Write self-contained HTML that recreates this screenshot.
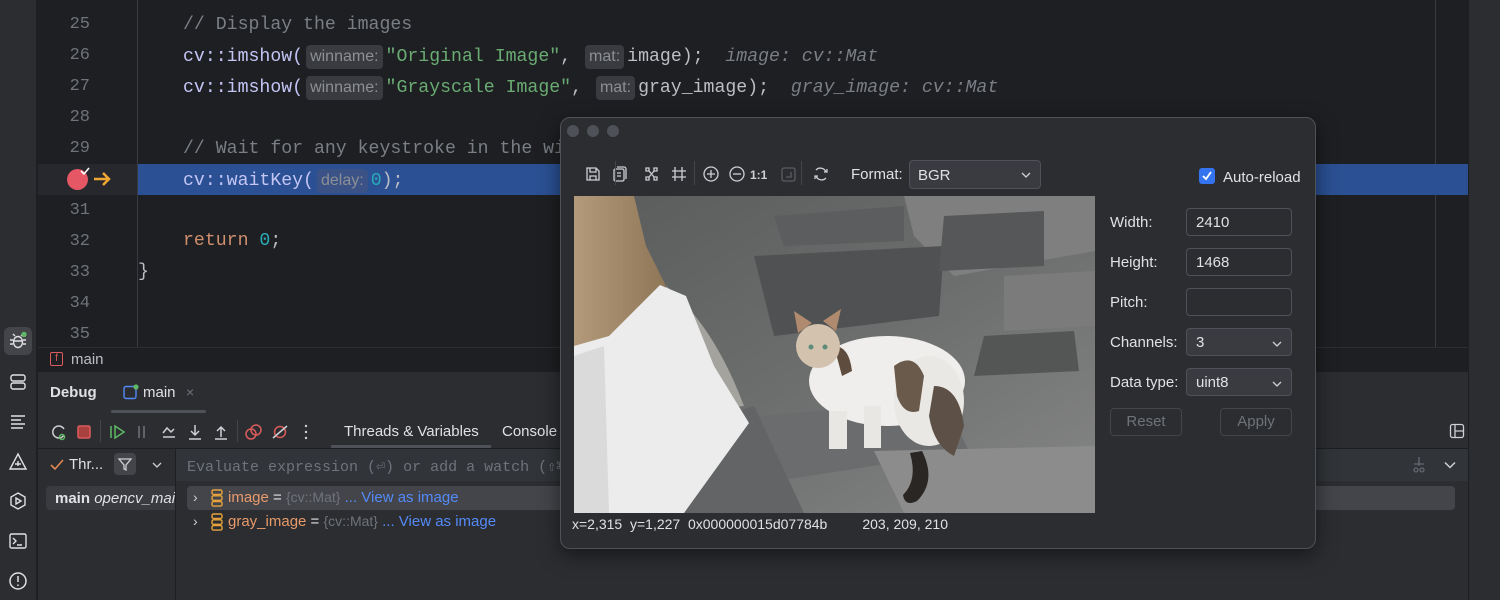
<!DOCTYPE html>
<html><head><meta charset="utf-8"><style>
*{box-sizing:border-box;margin:0;padding:0}
body{width:1500px;height:600px;overflow:hidden;background:#1e1f22;font-family:"Liberation Sans",sans-serif;color:#dfe1e5;position:relative}
.abs{position:absolute}
.mono{font-family:"Liberation Mono",monospace;font-size:18px}
.ln{position:absolute;left:50px;width:40px;text-align:right;color:#6f737a;font-family:"Liberation Mono",monospace;font-size:17px}
.code{position:absolute;left:183px;white-space:pre;font-family:"Liberation Mono",monospace;font-size:18.2px;color:#bcbec4}
.cm{color:#7a7e85}.str{color:#6aab73}.fn{color:#c3c5f5}.kw{color:#cf8e6d}.num{color:#2aacb8}
.hint{display:inline-block;background:#393b40;color:#8c8f94;font-family:"Liberation Sans",sans-serif;font-size:16px;border-radius:4px;padding:1px 4px;margin:0 3px;line-height:22px}
.it{font-style:italic;color:#7a7e85}
.tb{position:absolute;left:0;top:0;width:37px;height:600px;background:#2b2d30;border-right:1px solid #1e1f22}
.ico{position:absolute;left:8px;width:20px;height:20px}
.field{position:absolute;left:625px;width:106px;height:28px;border:1px solid #4e5157;border-radius:4px;background:#2b2d30;font-size:15px;padding:5px 9px;color:#dfe1e5}
.lbl{position:absolute;left:549px;font-size:15px;color:#dfe1e5}
</style></head><body>
<div class="tb">
 <div class="abs" style="left:4px;top:327px;width:28px;height:28px;background:#43454a;border-radius:6px"></div>
 <svg class="ico" style="top:331px" viewBox="0 0 20 20" fill="none" stroke="#dfe1e5" stroke-width="1.4"><ellipse cx="10" cy="11" rx="4.5" ry="5.5"/><path d="M5 9H2M5 13H2M15 9h3M15 13h3M7 5l-2-2M13 5l2-2M5.5 10h9"/><circle cx="16" cy="3.5" r="2.7" fill="#5fb865" stroke="none"/></svg>
 <svg class="ico" style="top:372px" viewBox="0 0 20 20" fill="none" stroke="#dfe1e5" stroke-width="1.4"><rect x="3" y="3" width="14" height="6" rx="2"/><rect x="3" y="11" width="14" height="6" rx="2"/></svg>
 <svg class="ico" style="top:412px" viewBox="0 0 20 20" fill="none" stroke="#dfe1e5" stroke-width="1.4"><path d="M3 4h14M3 8h10M3 12h14M3 16h12"/></svg>
 <svg class="ico" style="top:452px" viewBox="0 0 20 20" fill="none" stroke="#dfe1e5" stroke-width="1.4"><path d="M10 2L18 17H2Z M7 12h6M10 9v5"/></svg>
 <svg class="ico" style="top:491px" viewBox="0 0 20 20" fill="none" stroke="#dfe1e5" stroke-width="1.4"><path d="M10 2l7 4v8l-7 4-7-4V6z"/><path d="M8 7v6l5-3z"/></svg>
 <svg class="ico" style="top:531px" viewBox="0 0 20 20" fill="none" stroke="#dfe1e5" stroke-width="1.4"><rect x="2" y="3" width="16" height="14" rx="1.5"/><path d="M5 7l3 3-3 3M9 14h5"/></svg>
 <svg class="ico" style="top:571px" viewBox="0 0 20 20" fill="none" stroke="#dfe1e5" stroke-width="1.5"><circle cx="10" cy="10" r="8"/><path d="M10 5v6M10 13.5v1.5"/></svg>
</div>
<div class="abs" style="left:137px;top:0;width:1px;height:348px;background:#393b40"></div>
<div class="abs" style="left:1435px;top:0;width:1px;height:348px;background:#393b40"></div>
<div class="abs" style="left:1468px;top:0;width:32px;height:600px;background:#2b2d30;border-left:1px solid #1e1f22"></div>
<div class="abs" style="left:38px;top:164px;width:99px;height:31px;background:#26282e"></div>
<div class="abs" style="left:138px;top:164px;width:1330px;height:31px;background:#2b5093"></div>
<div class="ln" style="top:15px">25</div><div class="ln" style="top:46px">26</div><div class="ln" style="top:77px">27</div><div class="ln" style="top:108px">28</div><div class="ln" style="top:139px">29</div>
<div class="ln" style="top:201px">31</div><div class="ln" style="top:232px">32</div><div class="ln" style="top:263px">33</div><div class="ln" style="top:294px">34</div><div class="ln" style="top:325px">35</div>
<div class="abs" style="left:67px;top:169px;width:21px;height:21px;border-radius:50%;background:#e55765"></div>
<svg class="abs" style="left:79px;top:166px" width="12" height="10" viewBox="0 0 12 10"><path d="M2 5l3 3 5-6" stroke="#fff" stroke-width="1.6" fill="none"/></svg>
<svg class="abs" style="left:92px;top:170px" width="20" height="18" viewBox="0 0 20 18"><path d="M2 9h15M11 3l6 6-6 6" stroke="#f0a732" stroke-width="2.5" fill="none"/></svg>
<div class="code cm" style="top:15px">// Display the images</div>
<div class="code" style="top:45px"><span class="fn">cv::imshow(</span><span class="hint">winname:</span><span class="str">"Original Image"</span>, <span class="hint">mat:</span>image);  <span class="it">image: cv::Mat</span></div>
<div class="code" style="top:76px"><span class="fn">cv::imshow(</span><span class="hint">winname:</span><span class="str">"Grayscale Image"</span>, <span class="hint">mat:</span>gray_image);  <span class="it">gray_image: cv::Mat</span></div>
<div class="code cm" style="top:139px">// Wait for any keystroke in the window</div>
<div class="code" style="top:169px"><span class="fn">cv::waitKey(</span><span class="hint" style="background:#3a5286">delay:</span><span class="num">0</span>);</div>
<div class="code" style="top:231px"><span class="kw">return</span> <span class="num">0</span>;</div>
<div class="code" style="top:262px;left:138px">}</div>
<div class="abs" style="left:38px;top:347px;width:1430px;height:25px;background:#1e1f22;border-top:1px solid #2b2d30"></div>
<div class="abs" style="left:50px;top:352px;width:13px;height:14px;border:1.5px solid #db5c5c;border-radius:2px;color:#db5c5c;font-size:10px;text-align:center;line-height:11px">f</div>
<div class="abs" style="left:71px;top:351px;font-size:15px;color:#bcbec4">main</div>
<div class="abs" style="left:38px;top:372px;width:1430px;height:228px;background:#2b2d30"></div>
<div class="abs" style="left:50px;top:384px;font-size:15px;font-weight:bold">Debug</div>
<svg class="abs" style="left:123px;top:384px" width="16" height="16" viewBox="0 0 16 16"><rect x="1" y="2.5" width="12" height="12" rx="2" stroke="#548af7" stroke-width="1.4" fill="none"/><circle cx="13" cy="3" r="2.6" fill="#5fb865"/></svg>
<div class="abs" style="left:143px;top:384px;font-size:15px">main</div>
<div class="abs" style="left:186px;top:384px;font-size:14px;color:#6f737a">×</div>
<div class="abs" style="left:111px;top:410px;width:95px;height:3px;background:#4e5157;border-radius:2px"></div>
<div class="abs" style="left:38px;top:448px;width:1430px;height:1px;background:#1e1f22"></div>
<svg class="abs" style="left:50px;top:422px" width="270" height="20" viewBox="0 0 270 20" fill="none" stroke-width="1.5">
 <path d="M14 7a6 6 0 1 0 0 6" stroke="#ced0d6"/><circle cx="12" cy="15" r="2.5" stroke="#5fb865"/>
 <rect x="28" y="4" width="12" height="12" rx="1.5" stroke="#db5c5c" fill="#a94040"/>
 <path d="M61 4v12M65 4l9 6-9 6z" stroke="#5fb865"/>
 <path d="M89 4v12M94 4v12" stroke="#6f737a"/>
 <path d="M113 15h12M113 11l4-5 4 4 3-3" stroke="#ced0d6"/>
 <path d="M145 3v10M141 9l4 4 4-4M139 17h12" stroke="#ced0d6"/>
 <path d="M171 15V5M167 9l4-4 4 4M165 17h12" stroke="#ced0d6"/>
 <circle cx="201" cy="12" r="5" stroke="#db5c5c"/><circle cx="206" cy="8" r="5" stroke="#db5c5c"/>
 <circle cx="230" cy="10" r="5.5" stroke="#db5c5c"/><path d="M223 16l14-12" stroke="#ced0d6"/>
 <circle cx="256" cy="4" r="1.2" fill="#ced0d6" stroke="none"/><circle cx="256" cy="10" r="1.2" fill="#ced0d6" stroke="none"/><circle cx="256" cy="16" r="1.2" fill="#ced0d6" stroke="none"/>
</svg>
<div class="abs" style="left:100px;top:420px;width:1px;height:22px;background:#43454a"></div>
<div class="abs" style="left:237px;top:420px;width:1px;height:22px;background:#43454a"></div>
<div class="abs" style="left:344px;top:423px;font-size:15px">Threads &amp; Variables</div>
<div class="abs" style="left:331px;top:445px;width:160px;height:3px;background:#4e5157"></div>
<div class="abs" style="left:502px;top:423px;font-size:15px">Console</div>
<svg class="abs" style="left:1449px;top:423px" width="16" height="16" viewBox="0 0 16 16" fill="none" stroke="#ced0d6" stroke-width="1.3"><rect x="1.5" y="1.5" width="13" height="13" rx="2"/><path d="M6 1.5v13M6 8h8.5"/></svg>
<div class="abs" style="left:175px;top:449px;width:1px;height:151px;background:#1e1f22"></div>
<svg class="abs" style="left:50px;top:459px" width="14" height="12" viewBox="0 0 14 12"><path d="M1 6l4 4 8-9" stroke="#e08855" stroke-width="1.6" fill="none"/></svg>
<div class="abs" style="left:69px;top:456px;font-size:15px">Thr...</div>
<div class="abs" style="left:114px;top:453px;width:22px;height:22px;background:#43454a;border-radius:4px"></div>
<svg class="abs" style="left:117px;top:456px" width="16" height="16" viewBox="0 0 16 16"><path d="M2 3h12l-5 6v5l-2-1V9z" stroke="#ced0d6" stroke-width="1.3" fill="none"/></svg>
<svg class="abs" style="left:152px;top:461px" width="10" height="8" viewBox="0 0 10 8"><path d="M1 2l4 4 4-4" stroke="#ced0d6" stroke-width="1.3" fill="none"/></svg>
<div class="abs" style="left:46px;top:486px;width:129px;height:24px;background:#393b40;border-radius:4px 0 0 4px"></div>
<div class="abs" style="left:55px;top:490px;font-size:15px;white-space:nowrap;width:120px;overflow:hidden"><b>main</b> <i>opencv_main</i></div>
<div class="abs" style="left:176px;top:449px;width:1292px;height:32px;background:#313438"></div>
<div class="abs mono" style="left:187px;top:457px;font-size:15px;color:#6f737a;white-space:pre">Evaluate expression (⏎) or add a watch (⇧⌘⏎)</div>
<svg class="abs" style="left:1410px;top:456px" width="18" height="18" viewBox="0 0 18 18" fill="none" stroke="#6f737a" stroke-width="1.1"><path d="M9 1v9M4 8h10"/><circle cx="6" cy="14" r="2"/><circle cx="12" cy="14" r="2"/></svg>
<svg class="abs" style="left:1444px;top:461px" width="12" height="8" viewBox="0 0 12 8"><path d="M1 1.5l5 5 5-5" stroke="#ced0d6" stroke-width="1.5" fill="none"/></svg>
<div class="abs" style="left:187px;top:486px;width:1268px;height:24px;background:#43454a;border-radius:4px"></div>
<div class="abs" style="left:193px;top:489px;font-size:14px;color:#ced0d6">›</div>
<div class="abs" style="left:193px;top:513px;font-size:14px;color:#ced0d6">›</div>
<svg class="abs" style="left:211px;top:489px" width="12" height="18" viewBox="0 0 12 18" fill="none" stroke="#e8a33d" stroke-width="1.4"><rect x="1" y="1" width="10" height="4.5" rx="1.5"/><rect x="1" y="6.8" width="10" height="4.5" rx="1.5"/><rect x="1" y="12.6" width="10" height="4.5" rx="1.5"/></svg>
<svg class="abs" style="left:211px;top:513px" width="12" height="18" viewBox="0 0 12 18" fill="none" stroke="#e8a33d" stroke-width="1.4"><rect x="1" y="1" width="10" height="4.5" rx="1.5"/><rect x="1" y="6.8" width="10" height="4.5" rx="1.5"/><rect x="1" y="12.6" width="10" height="4.5" rx="1.5"/></svg>
<div class="abs" style="left:228px;top:489px;font-size:15px;white-space:pre"><span style="color:#e89a6a">image</span> = <span style="color:#6f737a;font-size:14px">{cv::Mat}</span> <span style="color:#548af7">... View as image</span></div>
<div class="abs" style="left:228px;top:513px;font-size:15px;white-space:pre"><span style="color:#e89a6a">gray_image</span> = <span style="color:#6f737a;font-size:14px">{cv::Mat}</span> <span style="color:#548af7">... View as image</span></div>
<div class="abs" style="left:560px;top:117px;width:756px;height:432px;background:#2b2d30;border:1px solid #4e5157;border-radius:10px;box-shadow:0 6px 20px rgba(0,0,0,.5)">
 <div class="abs" style="left:6px;top:7px;width:12px;height:12px;border-radius:50%;background:#4e5157"></div>
 <div class="abs" style="left:26px;top:7px;width:12px;height:12px;border-radius:50%;background:#4e5157"></div>
 <div class="abs" style="left:46px;top:7px;width:12px;height:12px;border-radius:50%;background:#4e5157"></div>
 <svg class="abs" style="left:22px;top:46px" width="250" height="20" viewBox="0 0 250 20" fill="none" stroke="#ced0d6" stroke-width="1.3">
  <path d="M4 4h9l3 3v9H4z M7 4v4h6V4 M7 16v-4h6v4"/>
  <rect x="31" y="5" width="10" height="12" rx="1.5"/><path d="M34 3h7a2 2 0 0 1 2 2v10 M34 9h4M34 12h4"/>
  <path d="M63 4h3v3h-3zM71 4h3v3h-3zM63 13h3v3h-3zM71 13h3v3h-3zM66 7l5 6M71 7l-5 6"/>
  <path d="M92 3v14M99 3v14M89 7h14M89 13h14"/>
  <circle cx="128" cy="10" r="7"/><path d="M124 10h8M128 6v8"/>
  <circle cx="154" cy="10" r="7"/><path d="M150 10h8"/>
  <rect x="199" y="4" width="13" height="13" rx="2" stroke="#5a5d63"/><path d="M203 13h5V8" stroke="#5a5d63"/>
  <path d="M233 6a6 6 0 0 1 10 2M243 14a6 6 0 0 1-10-2M241 8h3V5M235 12h-3v3"/>
 </svg>
 <div class="abs" style="left:189px;top:50px;font-size:12px;font-weight:bold;color:#ced0d6">1:1</div>
 <div class="abs" style="left:54px;top:43px;width:1px;height:24px;background:#43454a"></div>
 <div class="abs" style="left:133px;top:43px;width:1px;height:24px;background:#43454a"></div>
 <div class="abs" style="left:240px;top:43px;width:1px;height:24px;background:#43454a"></div>
 <div class="abs" style="left:290px;top:48px;font-size:15px">Format:</div>
 <div class="abs" style="left:348px;top:42px;width:132px;height:29px;background:#393b40;border:1px solid #4e5157;border-radius:4px;font-size:15px;padding:6px 8px">BGR</div>
 <svg class="abs" style="left:460px;top:53px" width="10" height="8" viewBox="0 0 10 8"><path d="M1 2l4 4 4-4" stroke="#ced0d6" stroke-width="1.3" fill="none"/></svg>
 <div class="abs" style="left:638px;top:50px;width:16px;height:16px;background:#3574f0;border-radius:3px"></div>
 <svg class="abs" style="left:640px;top:52px" width="12" height="12" viewBox="0 0 12 12"><path d="M2 6l3 3 5-7" stroke="#fff" stroke-width="1.8" fill="none"/></svg>
 <div class="abs" style="left:662px;top:51px;font-size:15px">Auto-reload</div>
 <svg class="abs" style="left:13px;top:78px" width="521" height="317" viewBox="0 0 521 317">
  <defs><linearGradient id="fl" x1="0" y1="0" x2="1" y2="1"><stop offset="0" stop-color="#5a5c5c"/><stop offset=".5" stop-color="#6c6e6e"/><stop offset="1" stop-color="#858685"/></linearGradient>
  <linearGradient id="st" x1="0" y1="0" x2="1" y2="0"><stop offset="0" stop-color="#b39a7a"/><stop offset="1" stop-color="#8e7657"/></linearGradient></defs>
  <rect width="521" height="317" fill="url(#fl)"/>
  <path d="M330 0H521V55L380 80L340 40Z" fill="#7e7f7e"/>
  <path d="M180 60L370 50L365 120L200 140Z" fill="#4f5152"/>
  <path d="M200 20L330 10L330 45L210 50Z" fill="#5b5d5e"/>
  <path d="M370 20L470 15L470 70L365 75Z" fill="#555758"/>
  <path d="M410 140L500 135L505 175L400 180Z" fill="#545656"/>
  <path d="M430 80L521 75V130L430 135Z" fill="#7a7b7a"/>
  <path d="M180 220L370 205L395 255L170 290Z" fill="#6a6c6d"/>
  <path d="M300 255L521 250V317H330Z" fill="#8b8c8b"/>
  <path d="M120 230L180 210L230 317H110Z" fill="#626465"/>
  <path d="M0 0H60L72 50L92 90L70 115L30 145L0 155Z" fill="url(#st)"/>
  <path d="M92 90Q140 130 170 210L120 215Z" fill="#a4a39e"/>
  <path d="M86 89L112 100L140 170L175 227L110 317H0V150L35 140L60 115Z" fill="#ececec"/>
  <path d="M0 160L30 150L35 317H0Z" fill="#dadada"/>
  <ellipse cx="313" cy="185" rx="78" ry="45" fill="#efeeec"/>
  <ellipse cx="355" cy="205" rx="35" ry="45" fill="#eae8e5"/>
  <path d="M320 170q20-15 30 10l-5 35q-15 5-22-15z" fill="#6a5a4b"/>
  <path d="M360 190q25 0 30 40l-10 30q-20-10-25-40z" fill="#5c5047"/>
  <path d="M260 150q15 0 18 25l-10 5z" fill="#5e4c3e"/>
  <path d="M348 255q15 30-5 50q-12 6-14-6q15-15 7-42z" fill="#2a2624"/>
  <path d="M255 215h18v38h-18zM290 210h17v42h-17z" fill="#e9e7e4"/>
  <circle cx="244" cy="150" r="22" fill="#d2c2ae"/>
  <path d="M224 137l-4-22 18 12zM262 135l5-22-18 12z" fill="#b08a6e"/>
  <circle cx="237" cy="151" r="2.5" fill="#5e8c7a"/><circle cx="251" cy="151" r="2.5" fill="#5e8c7a"/>
 </svg>
 <div class="abs" style="left:11px;top:398px;font-size:14px;white-space:pre">x=2,315  y=1,227  0x000000015d07784b         203, 209, 210</div>
 <div class="lbl" style="top:96px">Width:</div><div class="field" style="top:90px">2410</div>
 <div class="lbl" style="top:136px">Height:</div><div class="field" style="top:130px">1468</div>
 <div class="lbl" style="top:176px">Pitch:</div><div class="field" style="top:170px"></div>
 <div class="lbl" style="top:216px">Channels:</div><div class="field" style="top:210px;background:#393b40">3</div>
 <div class="lbl" style="top:256px">Data type:</div><div class="field" style="top:250px;background:#393b40">uint8</div>
 <svg class="abs" style="left:711px;top:222px" width="10" height="8" viewBox="0 0 10 8"><path d="M1 2l4 4 4-4" stroke="#ced0d6" stroke-width="1.3" fill="none"/></svg>
 <svg class="abs" style="left:711px;top:262px" width="10" height="8" viewBox="0 0 10 8"><path d="M1 2l4 4 4-4" stroke="#ced0d6" stroke-width="1.3" fill="none"/></svg>
 <div class="abs" style="left:549px;top:290px;width:72px;height:28px;border:1px solid #43454a;border-radius:4px;color:#6f737a;font-size:15px;text-align:center;line-height:26px">Reset</div>
 <div class="abs" style="left:659px;top:290px;width:72px;height:28px;border:1px solid #43454a;border-radius:4px;color:#6f737a;font-size:15px;text-align:center;line-height:26px">Apply</div>
</div>
</body></html>
